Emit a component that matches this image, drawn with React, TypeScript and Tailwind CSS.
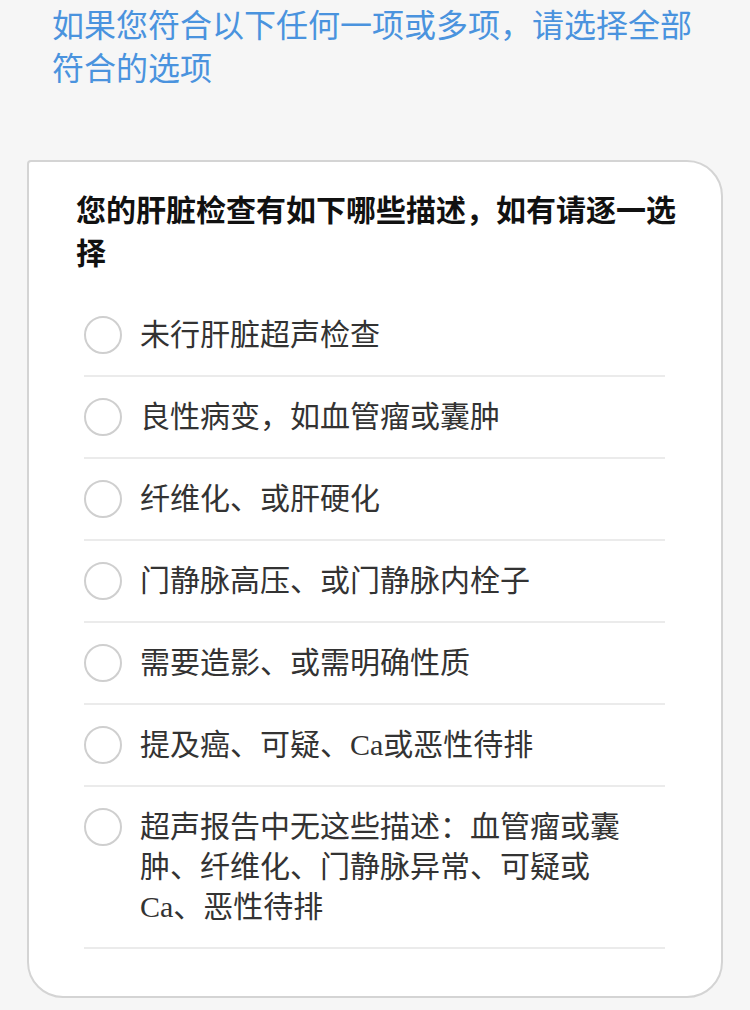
const options = [
  '未行肝脏超声检查',
  '良性病变，如血管瘤或囊肿',
  '纤维化、或肝硬化',
  '门静脉高压、或门静脉内栓子',
  '需要造影、或需明确性质',
  '提及癌、可疑、Ca或恶性待排',
  '超声报告中无这些描述：血管瘤或囊肿、纤维化、门静脉异常、可疑或Ca、恶性待排',
];

export default function App() {
  return (
    <div
      className="min-h-[1010px] w-[750px] bg-[#f6f6f6] pt-[5px]"
      style={{ fontFamily: '"Liberation Serif", "Noto Sans CJK SC", sans-serif' }}
    >
      <p className="pl-[52px] pr-[40px] text-[32px] leading-[43px] text-[#4a93de]">
        如果您符合以下任何一项或多项，请选择全部符合的选项
      </p>

      <div className="mt-[69px] ml-[27px] w-[696px] rounded-tl-[4px] rounded-tr-[36px] rounded-b-[36px] border-2 border-[#d4d4d4] bg-white pt-[27px] pb-[47px]">
        <h3 className="pl-[47px] pr-[40px] text-[30px] font-bold leading-[43px] text-[#111]">
          您的肝脏检查有如下哪些描述，如有请逐一选择
        </h3>

        <ul className="mt-[20px] ml-[55px] mr-[56px]">
          {options.map((opt) => (
            <li
              key={opt}
              className="flex items-start border-b-2 border-[#ebebeb] py-[20px] pr-[25px]"
            >
              <span className="mt-[1px] h-[38px] w-[38px] shrink-0 rounded-full border-2 border-[#cfcfcf] bg-white" />
              <span className="ml-[18px] text-[30px] leading-[40px] text-[#333]">
                {opt}
              </span>
            </li>
          ))}
        </ul>
      </div>
    </div>
  );
}
